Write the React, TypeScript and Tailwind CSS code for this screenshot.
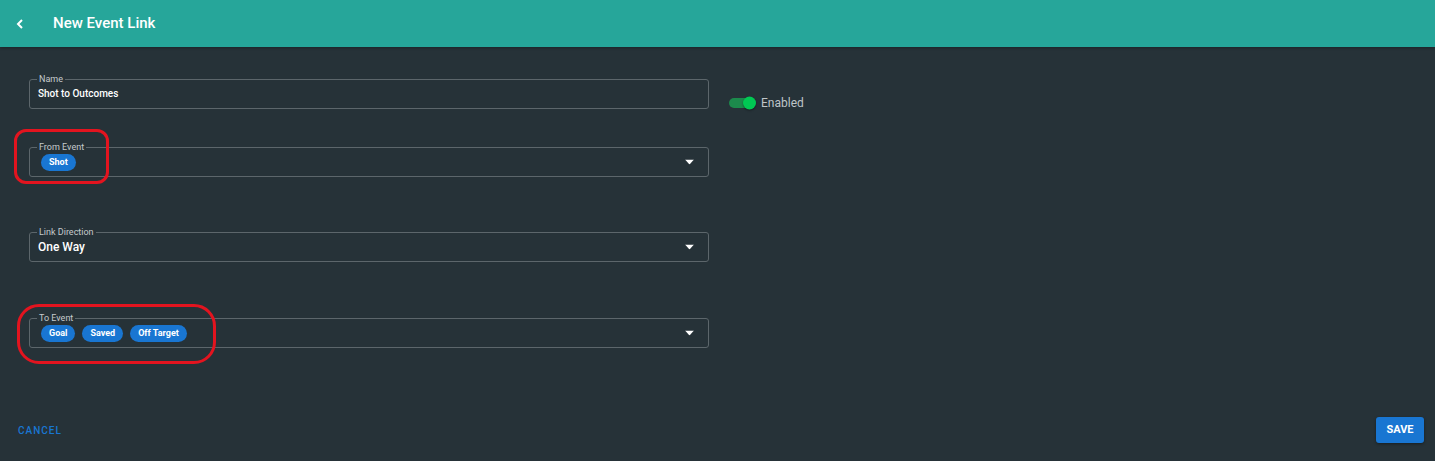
import React from "react";

const Chip = ({ label }: { label: string }) => (
  <span className="inline-flex h-[17px] items-center rounded-full bg-[#1976d2] px-[8px] text-[9px] font-bold leading-none text-white">
    {label}
  </span>
);

const Arrow = () => (
  <svg width="9" height="5" viewBox="0 0 9 5" className="absolute right-[14px] top-1/2 -translate-y-1/2">
    <path d="M0 0H9L4.5 5Z" fill="#ffffff" />
  </svg>
);

const Field = ({
  label,
  children,
  select,
  chips,
  className = "",
}: {
  label: string;
  children: React.ReactNode;
  select?: boolean;
  chips?: boolean;
  className?: string;
}) => (
  <div className={`relative h-[30px] w-[680px] rounded-[3px] border border-[#5c666b] ${className}`}>
    <span className="absolute left-[7px] top-[-6px] bg-[#263238] px-[2px] text-[9px] leading-[11px] text-[#c5cacc]">
      {label}
    </span>
    <div className={`flex h-full items-center gap-[7px] ${chips ? "pl-[11px] pt-[1px]" : "pl-[8px] pb-[1px]"}`}>{children}</div>
    {select && <Arrow />}
  </div>
);

export default function App() {
  return (
    <div
      className="relative flex h-[461px] w-full flex-col bg-[#263238] text-white"
      style={{ fontFamily: "Roboto, 'Liberation Sans', sans-serif" }}
    >
      <header className="flex h-[47px] shrink-0 items-center bg-[#26a69a] shadow-[0_1px_3px_rgba(0,0,0,0.3)]">
        <svg width="8" height="10" viewBox="0 0 8 10" className="ml-[16px]">
          <path d="M6 1L2 5l4 4" stroke="#fff" strokeWidth="2" fill="none" />
        </svg>
        <h1 className="ml-[29px] text-[15px] font-medium text-white">New Event Link</h1>
      </header>

      <div className="flex flex-1 pl-[29px] pr-[11px]">
        <div className="flex flex-col">
          <Field label="Name" className="mt-[32px]">
            <span className="text-[10px] font-medium">Shot to Outcomes</span>
          </Field>
          <Field label="From Event" select chips className="mt-[38px]">
            <Chip label="Shot" />
          </Field>
          <Field label="Link Direction" select className="mt-[55px]">
            <span className="text-[12px] font-medium">One Way</span>
          </Field>
          <Field label="To Event" select chips className="mt-[56px]">
            <Chip label="Goal" />
            <Chip label="Saved" />
            <Chip label="Off Target" />
          </Field>
        </div>
        <div className="ml-[20px] mt-[50px] flex h-[12px] items-center">
          <div className="relative h-[10px] w-[24px] rounded-full bg-[#1c8a4c]">
            <div className="absolute right-[-3px] top-1/2 h-[13px] w-[13px] -translate-y-1/2 rounded-full bg-[#00c853] shadow-[0_1px_2px_rgba(0,0,0,0.4)]" />
          </div>
          <span className="ml-[8px] text-[12px] text-[#bfc5c8]">Enabled</span>
        </div>
      </div>

      <footer className="flex h-[44px] items-center justify-between pb-[18px] pl-[18px] pr-[11px]">
        <span className="text-[10px] font-medium tracking-[0.1em] text-[#1976d2]">CANCEL</span>
        <button className="h-[26px] w-[48px] rounded-[3px] bg-[#1976d2] text-[11px] font-bold text-white shadow-[0_1px_3px_rgba(0,0,0,0.4)]">
          SAVE
        </button>
      </footer>

      <div className="pointer-events-none absolute left-[14px] top-[129px] h-[55px] w-[95px] rounded-[12px] border-[3px] border-[#e3141f]" />
      <div className="pointer-events-none absolute left-[17px] top-[304px] h-[60px] w-[199px] rounded-[22px] border-[3px] border-[#e3141f]" />
    </div>
  );
}
